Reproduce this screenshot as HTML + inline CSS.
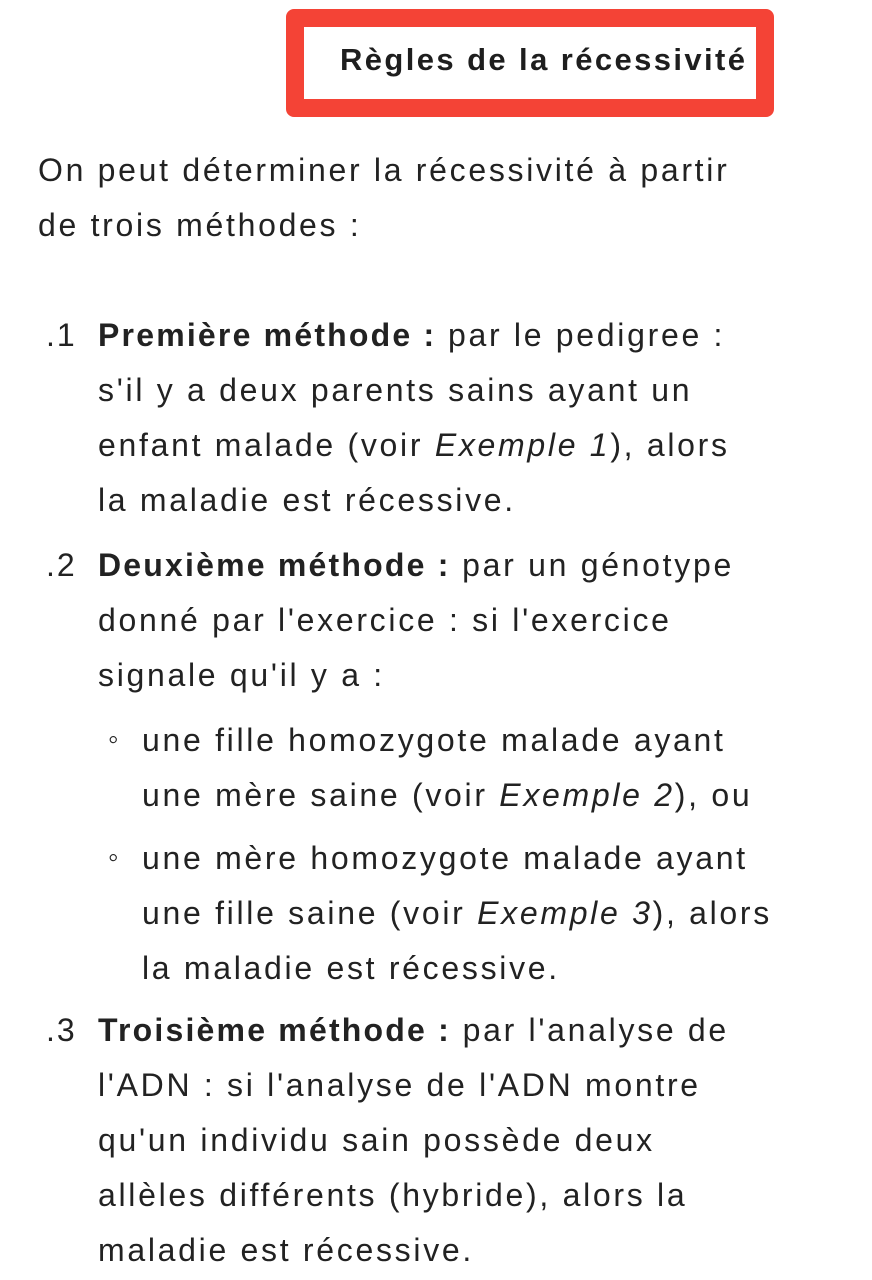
<!DOCTYPE html>
<html><head><meta charset="utf-8"><style>
body{margin:0;width:872px;height:1280px;background:#fff;position:relative;overflow:hidden;font-family:"Liberation Sans",sans-serif;color:#222;}
.box{position:absolute;left:286px;top:9px;width:452px;height:72px;border:18px solid #f44336;border-radius:8px;background:#fff;}
.t{position:absolute;left:340px;top:42px;font-size:31px;font-weight:bold;line-height:36px;white-space:nowrap;color:#1e1e1e;letter-spacing:2.4px;}
.l{position:absolute;font-size:32px;line-height:54px;white-space:nowrap;letter-spacing:2.7px;}
b{font-weight:bold;letter-spacing:2.2px;}
.n{position:absolute;left:46px;font-size:32px;line-height:54px;letter-spacing:2px;}
.bu{position:absolute;left:108px;font-size:30px;line-height:54px;}
</style></head><body>
<div class="box"></div>
<div class="t">Règles de la récessivité</div>
<div class="l" style="left:38px;top:143px">On peut déterminer la récessivité à partir</div>
<div class="l" style="left:38px;top:198px">de trois méthodes :</div>
<div class="n" style="top:308px">.1</div>
<div class="l" style="left:98px;top:308px"><b>Première méthode :</b> par le pedigree :</div>
<div class="l" style="left:98px;top:363px">s'il y a deux parents sains ayant un</div>
<div class="l" style="left:98px;top:418px">enfant malade (voir <i>Exemple 1</i>), alors</div>
<div class="l" style="left:98px;top:473px">la maladie est récessive.</div>
<div class="n" style="top:538px">.2</div>
<div class="l" style="left:98px;top:538px"><b>Deuxième méthode :</b> par un génotype</div>
<div class="l" style="left:98px;top:593px">donné par l'exercice : si l'exercice</div>
<div class="l" style="left:98px;top:648px">signale qu'il y a :</div>
<div class="bu" style="top:713px">◦</div>
<div class="l" style="left:142px;top:713px">une fille homozygote malade ayant</div>
<div class="l" style="left:142px;top:768px">une mère saine (voir <i>Exemple 2</i>), ou</div>
<div class="bu" style="top:831px">◦</div>
<div class="l" style="left:142px;top:831px">une mère homozygote malade ayant</div>
<div class="l" style="left:142px;top:886px">une fille saine (voir <i>Exemple 3</i>), alors</div>
<div class="l" style="left:142px;top:941px">la maladie est récessive.</div>
<div class="n" style="top:1003px">.3</div>
<div class="l" style="left:98px;top:1003px"><b>Troisième méthode :</b> par l'analyse de</div>
<div class="l" style="left:98px;top:1058px">l'ADN : si l'analyse de l'ADN montre</div>
<div class="l" style="left:98px;top:1113px">qu'un individu sain possède deux</div>
<div class="l" style="left:98px;top:1168px">allèles différents (hybride), alors la</div>
<div class="l" style="left:98px;top:1223px">maladie est récessive.</div>
</body></html>
